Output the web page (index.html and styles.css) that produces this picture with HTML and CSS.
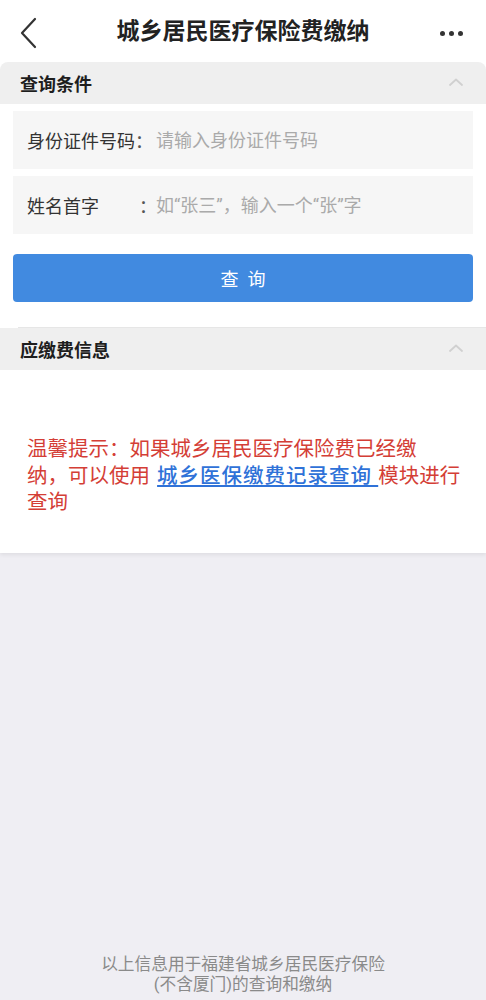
FILE: index.html
```html
<!DOCTYPE html>
<html lang="zh-CN">
<head>
<meta charset="utf-8">
<title>城乡居民医疗保险费缴纳</title>
<link rel="stylesheet" href="styles.css">
</head>
<body>
<div class="page">
  <div class="top">
    <header class="nav">
      <div class="nav-left">
        <svg class="back" width="18" height="32" viewBox="0 0 18 32"><polyline points="15,2 2,16 15,30" fill="none" stroke="#333" stroke-width="2.2" stroke-linecap="round" stroke-linejoin="round"/></svg>
      </div>
      <h1 class="title">城乡居民医疗保险费缴纳</h1>
      <div class="nav-right">
        <span class="dot"></span><span class="dot"></span><span class="dot"></span>
      </div>
    </header>

    <div class="sec-head first">
      <span>查询条件</span>
      <svg class="chev" width="14" height="8" viewBox="0 0 14 8"><polyline points="1,7 7,1.5 13,7" fill="none" stroke="#d0d0d0" stroke-width="1.8" stroke-linecap="round" stroke-linejoin="round"/></svg>
    </div>

    <div class="form">
      <div class="row">
        <span class="label">身份证件号码</span><span class="colon">：</span>
        <input class="field" type="text" placeholder="请输入身份证件号码">
      </div>
      <div class="row">
        <span class="label">姓名首字</span><span class="colon shift">：</span>
        <input class="field" type="text" placeholder="如“张三”，输入一个“张”字">
      </div>
      <button class="btn" type="button">查询</button>
    </div>

    <div class="divider"></div>

    <div class="sec-head">
      <span>应缴费信息</span>
      <svg class="chev" width="14" height="8" viewBox="0 0 14 8"><polyline points="1,7 7,1.5 13,7" fill="none" stroke="#d0d0d0" stroke-width="1.8" stroke-linecap="round" stroke-linejoin="round"/></svg>
    </div>

    <div class="tip">
      温馨提示：如果城乡居民医疗保险费已经缴<br>纳，可以使用 <a class="link" href="#">城乡医保缴费记录查询 </a> 模块进行<br>查询
    </div>
  </div>

  <footer class="foot">以上信息用于福建省城乡居民医疗保险<br>(不含厦门)的查询和缴纳</footer>
</div>
</body>
</html>
```

FILE: styles.css
```css
* { box-sizing: border-box; }
html, body { margin: 0; padding: 0; }
body {
  background: #efeef3;
  font-family: Roboto, "Noto Sans CJK SC", sans-serif;
  color: #222;
}
.page {
  min-height: 1000px;
  display: flex;
  flex-direction: column;
}
.top {
  background: #fff;
  box-shadow: 0 2px 4px rgba(0,0,0,0.07);
}
.nav {
  height: 62px;
  display: grid;
  grid-template-columns: 1fr auto 1fr;
  align-items: center;
}
.nav-left { padding-left: 20px; display: flex; align-items: center; padding-top: 4px; }
.title {
  margin: 0;
  font-size: 23px;
  font-weight: 700;
  color: #222;
  line-height: 30px;
  padding-top: 2px;
}
.nav-right {
  display: flex;
  justify-content: flex-end;
  gap: 4px;
  padding-right: 23px;
  padding-top: 4px;
}
.dot {
  width: 5px; height: 5px;
  border-radius: 50%;
  background: #333;
}
.sec-head {
  height: 42px;
  background: #efefef;
  display: flex;
  align-items: center;
  justify-content: space-between;
  padding: 0 23px 0 20px;
  font-size: 18px;
  font-weight: 700;
  color: #1e1e1e;
}
.sec-head.first { border-radius: 8px 8px 0 0; }
.chev { margin-top: -2px; }
.form {
  padding: 7px 13px 0;
  display: flex;
  flex-direction: column;
  gap: 7px;
}
.row {
  height: 58px;
  background: #f6f6f6;
  display: flex;
  align-items: center;
  padding-left: 14px;
  font-size: 18px;
  color: #333;
}
.label { width: 108px; flex: none; }
.colon { width: 18px; flex: none; color: #555; }
.colon.shift { text-indent: 4px; }
.field {
  flex: 1;
  min-width: 0;
  border: 0;
  outline: 0;
  background: transparent;
  font-family: inherit;
  font-size: 18px;
  color: #333;
  padding: 0 0 0 3px;
}
.field::placeholder { color: #aaa; }
.btn {
  margin-top: 13px;
  height: 48px;
  border: 0;
  border-radius: 4px;
  background: #418ae0;
  color: #fff;
  font-family: inherit;
  font-size: 18px;
  letter-spacing: 9px;
  text-indent: 9px;
}
.divider {
  margin: 25px 0 0 18px;
  border-top: 1px solid #e6e6e6;
}
.tip {
  padding: 66px 20px 37px 27px;
  font-size: 20.5px;
  line-height: 26.5px;
  color: #d43e36;
  white-space: nowrap;
}
.link {
  color: #2f72d8;
  text-decoration: underline;
  font-weight: 500;
  letter-spacing: 1px;
  margin-left: 2px;
}
.foot {
  margin-top: auto;
  text-align: center;
  font-size: 16.7px;
  line-height: 20px;
  color: #8a8a8a;
  padding-bottom: 5px;
}
```
